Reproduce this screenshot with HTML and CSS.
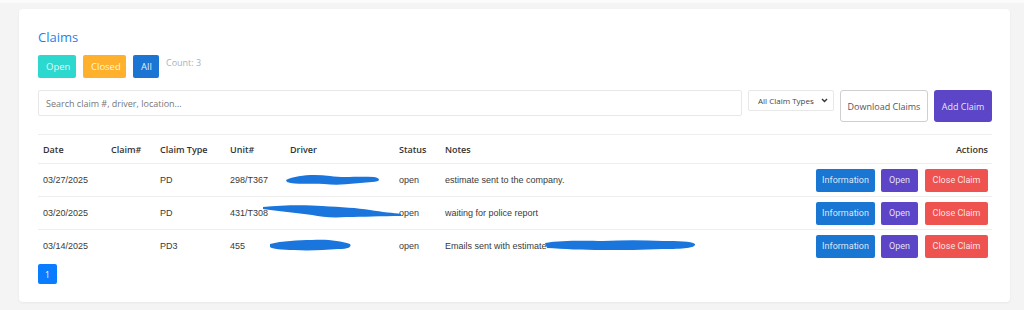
FILE: index.html
```html
<!DOCTYPE html>
<html>
<head>
<meta charset="utf-8">
<link rel="stylesheet" href="styles.css">
</head>
<body>
<div class="topband"></div>
<div class="card">
  <h2 class="title">Claims</h2>
  <div class="filters">
    <button class="fbtn teal">Open</button>
    <button class="fbtn orange">Closed</button>
    <button class="fbtn blue">All</button>
    <span class="count">Count: 3</span>
  </div>
  <div class="toolbar">
    <input class="search" type="text" placeholder="Search claim #, driver, location...">
    <span class="selwrap">
      <select class="types"><option>All Claim Types</option></select>
      <svg class="chev" width="7" height="5" viewBox="0 0 7 5"><path d="M1 1 L3.5 3.5 L6 1" fill="none" stroke="#333" stroke-width="1.4"/></svg>
    </span>
    <button class="download">Download Claims</button>
    <button class="add">Add Claim</button>
  </div>
  <table class="claims">
    <colgroup>
      <col class="c-date"><col class="c-claim"><col class="c-type"><col class="c-unit"><col class="c-driver"><col class="c-status"><col><col class="c-actions">
    </colgroup>
    <thead>
      <tr><th>Date</th><th>Claim#</th><th>Claim Type</th><th>Unit#</th><th>Driver</th><th>Status</th><th>Notes</th><th class="right">Actions</th></tr>
    </thead>
    <tbody>
      <tr>
        <td>03/27/2025</td><td></td><td>PD</td><td>298/T367</td>
        <td class="rel"><svg class="blob b1" width="98" height="14" viewBox="0 0 98 14"><path d="M2 7 C12 2 30 1 46 3 C60 5 72 3 90 4 C97 5 97 9 88 9 C72 10 58 13 40 11 C26 10 12 12 3 9 Z" fill="#1a76dd"/></svg></td>
        <td>open</td><td>estimate sent to the company.</td>
        <td class="actions"><button class="abtn info">Information</button><button class="abtn open">Open</button><button class="abtn close">Close Claim</button></td>
      </tr>
      <tr>
        <td>03/20/2025</td><td></td><td>PD</td><td>431/T308</td>
        <td class="rel"><svg class="blob b2" width="140" height="16" viewBox="0 0 140 16"><path d="M1 3 C20 1 45 1 60 2 C80 3 95 4 108 6 C120 8 132 9 139 10 L139 12 C120 12 100 13 85 13 C70 14 60 13 50 11 C35 9 15 7 1 5 Z" fill="#1a76dd"/></svg></td>
        <td>open</td><td>waiting for police report</td>
        <td class="actions"><button class="abtn info">Information</button><button class="abtn open">Open</button><button class="abtn close">Close Claim</button></td>
      </tr>
      <tr>
        <td>03/14/2025</td><td></td><td>PD3</td><td>455</td>
        <td class="rel"><svg class="blob b3" width="84" height="14" viewBox="0 0 84 14"><path d="M2 6 C14 3 30 2 44 2 C60 1 72 3 82 6 C84 9 80 11 70 11 C56 12 40 13 26 12 C14 12 4 11 2 9 Z" fill="#1a76dd"/></svg></td>
        <td>open</td>
        <td class="rel">Emails sent with estimate<svg class="blob b4" width="154" height="14" viewBox="0 0 154 14"><path d="M2 5 C20 2 45 3 60 3 C80 2 100 2 120 3 C135 3 148 3 152 6 C153 10 140 11 120 11 C100 12 80 12 60 12 C40 12 20 11 4 10 Z" fill="#1a76dd"/></svg></td>
        <td class="actions"><button class="abtn info">Information</button><button class="abtn open">Open</button><button class="abtn close">Close Claim</button></td>
      </tr>
    </tbody>
  </table>
  <div class="pager"><button class="page">1</button></div>
</div>
</body>
</html>
```

FILE: styles.css
```css
* { box-sizing: border-box; }
html, body { margin: 0; padding: 0; }
body {
  background: #f4f4f5;
  font-family: "Liberation Sans", Arial, sans-serif;
  color: #333;
  width: 1024px;
  height: 310px;
  overflow: hidden;
}
.topband { height: 3px; background: #fbfbfb; }
.card {
  margin: 6px 14px 0 19px;
  padding: 18px 18px 18px 19px;
  background: #fff;
  border-radius: 4px;
  box-shadow: 0 1px 3px rgba(0,0,0,0.05);
}
.title {
  margin: 0;
  font-family: "Open Sans", sans-serif;
  font-weight: 400;
  font-size: 13px;
  line-height: 20px;
  color: #1b83ea;
}
.filters {
  display: flex;
  align-items: flex-start;
  gap: 7px;
  margin-top: 8px;
}
button {
  font-family: "Open Sans", sans-serif;
  border: 0;
  cursor: pointer;
}
.fbtn {
  height: 23px;
  padding: 0 8px;
  border-radius: 2px;
  font-size: 9.5px;
  color: rgba(255,255,255,0.9);
}
.teal { background: #2dd8cf; width: 38px; }
.orange { background: #ffb02c; width: 43px; }
.blue { background: #1a75d3; width: 26px; }
.count {
  font-family: "Open Sans", sans-serif;
  font-size: 9px;
  color: #a9b1bb;
  padding-top: 1px;
}
.toolbar {
  display: flex;
  align-items: flex-start;
  gap: 6px;
  margin-top: 12px;
}
.search {
  flex: 1;
  height: 26px;
  border: 1px solid #e8e8e8;
  border-radius: 2px;
  padding: 0 7px;
  font-family: "Open Sans", sans-serif;
  font-size: 9px;
  color: #555;
  outline: none;
}
.search::placeholder { color: #777; }
.selwrap {
  position: relative;
  display: block;
  width: 86px;
  height: 21px;
}
.types {
  -webkit-appearance: none;
  appearance: none;
  width: 86px;
  height: 21px;
  border: 1px solid #e8e8e8;
  border-radius: 2px;
  background: #fff;
  font-family: "Open Sans", sans-serif;
  font-size: 8px;
  color: #444;
  padding: 0 14px 0 9px;
  outline: none;
}
.chev {
  position: absolute;
  right: 6px;
  top: 8px;
  pointer-events: none;
}
.download {
  width: 88px;
  height: 32px;
  background: #fff;
  border: 1px solid #cfcfcf;
  border-radius: 3px;
  font-size: 9px;
  color: #555;
  padding: 0;
}
.add {
  width: 58px;
  height: 32px;
  background: #5c46c7;
  border-radius: 3px;
  color: rgba(255,255,255,0.88);
  font-size: 9px;
  padding: 0;
}
.claims {
  width: 100%;
  margin-top: 12px;
  border-collapse: collapse;
  table-layout: fixed;
  border-top: 1px solid #eeeeee;
}
.c-date { width: 68px; }
.c-claim { width: 49px; }
.c-type { width: 70px; }
.c-unit { width: 60px; }
.c-driver { width: 109px; }
.c-status { width: 46px; }
.c-actions { width: 190px; }
th {
  font-family: "Open Sans", sans-serif;
  font-weight: 600;
  font-size: 9px;
  color: #333;
  text-align: left;
  height: 29px;
  padding: 0 5px;
  border-bottom: 1px solid #eeeeee;
}
th.right { text-align: right; padding-right: 4px; }
td {
  font-size: 9px;
  color: #3a3a3a;
  height: 33px;
  padding: 0 5px;
  white-space: nowrap;
}
tbody tr + tr td { border-top: 1px solid #eeeeee; }
td.rel { position: relative; overflow: visible; }
.blob { position: absolute; }
.b1 { left: -1px; top: 9px; }
.b2 { left: -23px; top: 7px; }
.b3 { left: -17px; top: 8px; }
.b4 { left: 103px; top: 8px; }
.actions {
  text-align: right;
  padding-right: 4px;
  font-size: 0;
}
.abtn {
  height: 23px;
  border-radius: 2px;
  font-family: Roboto, sans-serif;
  font-size: 9px;
  color: rgba(255,255,255,0.85);
  padding: 0;
  margin-left: 6px;
  vertical-align: middle;
}
.info { width: 59px; background: #1976d2; }
.open { width: 37px; background: #5c46c7; }
.close { width: 63px; background: #ef5350; margin-left: 7px; }
.pager { margin-top: 1px; }
.page {
  width: 19px;
  height: 20px;
  background: #0a7cff;
  color: #fff;
  border-radius: 2px;
  font-size: 8.5px;
  padding: 0;
}
```
